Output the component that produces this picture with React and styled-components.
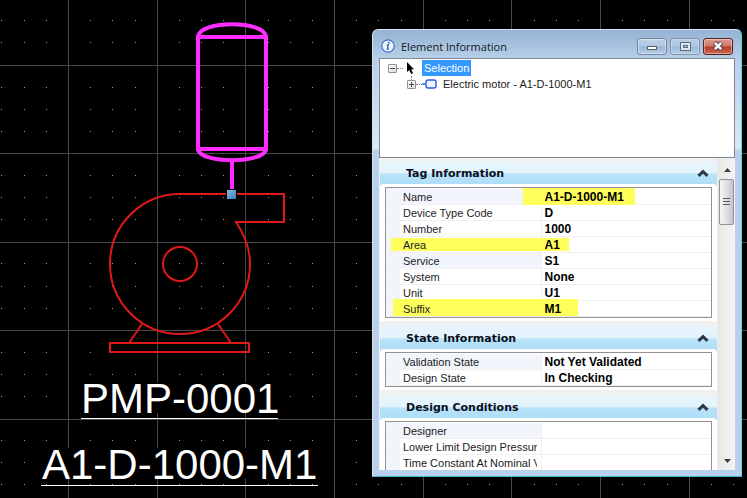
import { useState } from "react";
import styled, { createGlobalStyle } from "styled-components";

const GlobalStyle = createGlobalStyle`
  * {
    box-sizing: border-box;
  }
  body {
    margin: 0;
    background: #000000;
    font-family: "Liberation Sans", Arial, sans-serif;
    font-size: 11px;
    color: #1c1c1c;
  }
  button {
    padding: 0;
    font: inherit;
    color: inherit;
    cursor: pointer;
  }
`;

const Workspace = styled.main`
  position: relative;
  height: 100vh;
  min-height: 320px;
  overflow: hidden;
`;

const Drawing = styled.svg`
  display: block;
  width: 100%;
  height: 100%;
`;

const TagLabel = styled.text`
  font-family: "Liberation Sans", Arial, sans-serif;
  font-size: 42px;
  fill: #ffffff;
`;

const Dialog = styled.section`
  position: absolute;
  top: 29px;
  right: 5px;
  bottom: 21px;
  width: 370px;
  display: flex;
  flex-direction: column;
  padding: 0 6px 6px;
  border: 1px solid #45b5cf;
  border-top-color: #d5e5f4;
  border-left-color: #d3e2f2;
  border-right-color: #52d3ee;
  border-radius: 6px 6px 0 0;
  background: linear-gradient(
    #96b3d3,
    #b8d0e9 30px,
    #dbe7f5 118px,
    #b9d1ea 121px
  );
`;

const TitleBar = styled.header`
  flex: none;
  height: 28px;
  display: flex;
  align-items: center;
  gap: 5px;
  padding: 4px 2px 0;
`;

const Title = styled.h1`
  flex: 1;
  margin: 0;
  padding-left: 1px;
  font-family: "Open Sans", "Noto Sans", sans-serif;
  font-size: 11px;
  font-weight: 400;
  color: #101820;
`;

const WindowButtons = styled.div`
  display: flex;
  gap: 3px;
`;

const WindowButton = styled.button`
  width: 30px;
  height: 17px;
  display: flex;
  align-items: center;
  justify-content: center;
  border: 1px solid ${(props) => (props.$close ? "#5a1f1c" : "#6f87a4")};
  border-radius: 3px;
  box-shadow: inset 0 0 0 1px rgba(255, 255, 255, 0.4);
  background: ${(props) =>
    props.$close
      ? "linear-gradient(#dd9f94 0%, #cf7466 48%, #b73c27 52%, #cb6a52 100%)"
      : "linear-gradient(#bfd2e7 0%, #b0c7e0 48%, #9bb7d5 52%, #b5cbe3 100%)"};
  opacity: ${(props) => (props.$dim ? 0.75 : 1)};
`;

const TreePane = styled.ul`
  flex: none;
  height: 100px;
  margin: 0;
  padding: 1px 8px;
  border: 1px solid #828790;
  background: #ffffff;
  list-style: none;
`;

const TreeRow = styled.li`
  height: 16px;
  display: flex;
  align-items: center;
  padding-left: ${(props) => props.$depth * 19}px;
`;

const Expander = styled.button`
  position: relative;
  flex: none;
  width: 9px;
  height: 9px;
  border: 1px solid #919191;
  border-radius: 1px;
  background: linear-gradient(135deg, #ffffff, #dcdcdc);

  svg {
    display: block;
  }

  &::before {
    content: "";
    display: ${(props) => (props.$child ? "block" : "none")};
    position: absolute;
    left: 3px;
    bottom: 8px;
    height: 4px;
    border-left: 1px dotted #808080;
  }
`;

const Dots = styled.span`
  width: 6px;
  border-top: 1px dotted #808080;
`;

const TreeText = styled.span`
  height: 16px;
  margin-left: ${(props) => (props.$selected ? 5 : 3)}px;
  padding: 0 2px;
  line-height: 16px;
  color: ${(props) => (props.$selected ? "#ffffff" : "#1c1c1c")};
  background: ${(props) => (props.$selected ? "#3399ff" : "transparent")};
`;

const Body = styled.div`
  flex: 1;
  min-height: 0;
  display: flex;
  background: #f0f0f0;
`;

const Sections = styled.div`
  flex: 1;
  min-width: 0;
  overflow: hidden;
  padding: 3px 1px 0 1px;
`;

const Section = styled.section`
  margin-bottom: 5px;
  background: linear-gradient(#e4f5fd, #aedef8 23px);
`;

const SectionTitle = styled.h2`
  margin: 0;
  font-family: "DejaVu Sans", Verdana, sans-serif;
  font-size: 11px;
  font-weight: 700;
  color: #0a0f1c;
`;

const SectionToggle = styled.button`
  width: 100%;
  height: 23px;
  display: flex;
  align-items: center;
  justify-content: space-between;
  padding: 2px 8px 0 26px;
  border: none;
  background: linear-gradient(#e9f4fa 0%, #e2f4fd 52%, #b8e2f9 56%, #aedef8 100%);

  svg {
    transform: ${(props) => (props.$open ? "none" : "rotate(180deg)")};
  }
`;

const SectionBody = styled.div`
  padding: 3px 5px 3px;
  border-radius: 4px 4px 0 0;
  background: #ffffff;
`;

const PropertyBox = styled.div`
  padding-top: 1px;
  border: 1px solid #929292;
  background: linear-gradient(90deg, #f2f5fb 14px, #ffffff 14px);
`;

const PropertyTable = styled.table`
  width: 100%;
  table-layout: fixed;
  border-collapse: collapse;
`;

const PropertyRow = styled.tr`
  position: relative;
  height: 16px;
`;

const NameCell = styled.th`
  width: 155px;
  height: 16px;
  padding: 0 4px 0 17px;
  text-align: left;
  font-weight: 400;
  line-height: 15px;
  border-right: 1px solid #f0f0f0;
  background: ${(props) => (props.$shaded ? "#f2f5fb" : "transparent")};
  box-shadow: inset 0 -1px #f0f0f0;
`;

const ValueCell = styled.td`
  height: 16px;
  padding: 0 0 0 3px;
  font-size: 12px;
  font-weight: 700;
  line-height: 15px;
  color: #000000;
  box-shadow: inset 0 -1px #f0f0f0;
`;

// keeps the text above the marker stroke
const CellText = styled.span`
  position: relative;
  z-index: 1;
  display: block;
  overflow: hidden;
  white-space: nowrap;
`;

// yellow marker stroke laid over a property row
const Marker = styled.span`
  position: absolute;
  top: ${(props) => props.$mark.top}px;
  left: ${(props) => props.$mark.left}px;
  width: ${(props) => props.$mark.width}px;
  height: ${(props) => props.$mark.height}px;
  background: #ffff5c;
  pointer-events: none;
`;

const ScrollBar = styled.div`
  flex: none;
  width: 17px;
  display: flex;
  flex-direction: column;
  padding-top: 3px;
  border-left: 1px solid #e2e2e2;
  background: linear-gradient(90deg, #e9e9e9, #f3f3f3);
`;

const ScrollArrow = styled.button`
  height: 18px;
  display: flex;
  align-items: center;
  justify-content: center;
  border: none;
  background: transparent;
`;

const ScrollTrack = styled.div`
  flex: 1;
`;

const ScrollThumb = styled.button`
  width: 15px;
  height: 46px;
  display: flex;
  align-items: center;
  justify-content: center;
  border: 1px solid #929292;
  border-radius: 2px;
  background: linear-gradient(90deg, #f6f6f6, #e4e4e4 45%, #c4c4c8);
`;

const sections = [
  {
    title: "Tag Information",
    rows: [
      {
        name: "Name",
        value: "A1-D-1000-M1",
        shaded: true,
        mark: { top: -1, left: 137, width: 112, height: 17 },
      },
      { name: "Device Type Code", value: "D" },
      { name: "Number", value: "1000" },
      {
        name: "Area",
        value: "A1",
        mark: { top: 1, left: 5, width: 178, height: 13 },
      },
      { name: "Service", value: "S1", shaded: true },
      { name: "System", value: "None" },
      { name: "Unit", value: "U1" },
      {
        name: "Suffix",
        value: "M1",
        mark: { top: -2, left: 7, width: 185, height: 17 },
      },
    ],
  },
  {
    title: "State Information",
    rows: [
      { name: "Validation State", value: "Not Yet Validated", shaded: true },
      { name: "Design State", value: "In Checking" },
    ],
  },
  {
    title: "Design Conditions",
    rows: [
      { name: "Designer", value: "", shaded: true },
      { name: "Lower Limit Design Pressur", value: "" },
      { name: "Time Constant At Nominal V", value: "" },
    ],
  },
];

const GRID_X = 88.67;
const GRID_Y = 88.4;
const columns = Array.from({ length: 30 }, (_, i) => 68 + (i - 1) * GRID_X);
const rows = Array.from({ length: 18 }, (_, i) => 65 + (i - 1) * GRID_Y);
const minor = [1, 2, 3];

const dotX = columns.flatMap((x) => minor.map((n) => Math.round(x + (n * GRID_X) / 4)));
const dotY = rows.flatMap((y) => minor.map((n) => Math.floor(y + (n * GRID_Y) / 4)));

const dotsPath = dotX
  .flatMap((x) => dotY.map((y) => `M${x} ${y}h1v1h-1z`))
  .join("");

const Grid = () => (
  <g shapeRendering="crispEdges">
    {columns.map((x) => (
      <rect key={x} x={Math.round(x)} width="1" height="100%" fill="#484848" />
    ))}
    {rows.map((y) => (
      <rect key={y} y={Math.round(y)} width="100%" height="1" fill="#484848" />
    ))}
    <path d={dotsPath} fill="#949494" />
  </g>
);

const PlantDrawing = () => (
  <Drawing role="img" aria-label="Pump PMP-0001 with electric motor A1-D-1000-M1">
    <defs>
      <linearGradient id="grip" x1="0" y1="0" x2="1" y2="1">
        <stop offset="0" stopColor="#85bce3" />
        <stop offset="1" stopColor="#3b7fb5" />
      </linearGradient>
    </defs>
    <Grid />

    <g fill="none" stroke="#e01818" strokeWidth="2">
      <path d="M180 194H284V222H236C244 234 250 248 250 264A70 70 0 1 1 180 194" />
      <circle cx="180" cy="264" r="17" />
      <path d="M142 324L129 343M218 324L231 343" />
      <rect x="110" y="343" width="139" height="9" />
    </g>

    <g fill="none" stroke="#ff2cff" strokeWidth="4">
      <rect x="198" y="37" width="68" height="112" />
      <path d="M198 37C199 20 265 20 266 37M198 149C199 164 265 164 266 149" />
      <path d="M232 160V189" />
    </g>
    <rect x="226" y="189" width="11" height="11" fill="#000000" />
    <rect x="227" y="190" width="9" height="9" fill="url(#grip)" />

    <rect x="81" y="382" width="198" height="31" fill="#000000" />
    <TagLabel x="81" y="413">
      PMP-0001
    </TagLabel>
    <rect x="81" y="418" width="197" height="1" fill="#ffffff" />
    <rect x="41" y="448" width="278" height="31" fill="#000000" />
    <TagLabel x="42" y="479">
      A1-D-1000-M1
    </TagLabel>
    <rect x="41" y="485" width="277" height="1" fill="#ffffff" />
  </Drawing>
);

const InfoIcon = () => (
  <svg width="14" height="14" viewBox="0 0 14 14" aria-hidden="true">
    <circle cx="7" cy="7" r="6.2" fill="#eef5fd" stroke="#3a6fd0" strokeWidth="1.2" />
    <circle cx="7.9" cy="3.7" r="0.9" fill="#2456c4" />
    <path
      d="M5.8 6H7.3L6.4 10.2H7.9"
      fill="none"
      stroke="#2456c4"
      strokeWidth="1.3"
    />
  </svg>
);

const ExpanderIcon = ({ open }) => (
  <svg width="7" height="7" viewBox="0 0 7 7" aria-hidden="true">
    <path d={open ? "M1 3.5h5" : "M1 3.5h5M3.5 1v5"} stroke="#3d4a66" />
  </svg>
);

const PropertySection = ({ section }) => {
  const [open, setOpen] = useState(true);

  return (
    <Section>
      <SectionTitle>
        <SectionToggle $open={open} aria-expanded={open} onClick={() => setOpen(!open)}>
          {section.title}
          <svg width="12" height="9" viewBox="0 0 12 9" aria-hidden="true">
            <path
              d="M1.5 6.8L6 2.6L10.5 6.8"
              fill="none"
              stroke="#2c3a44"
              strokeWidth="3"
            />
          </svg>
        </SectionToggle>
      </SectionTitle>
      {open && (
        <SectionBody>
          <PropertyBox>
            <PropertyTable aria-label={section.title}>
              <tbody>
                {section.rows.map((row) => (
                  <PropertyRow key={row.name}>
                    <NameCell scope="row" $shaded={row.shaded}>
                      <CellText>{row.name}</CellText>
                    </NameCell>
                    <ValueCell>
                      <CellText>{row.value}</CellText>
                      {row.mark && <Marker $mark={row.mark} />}
                    </ValueCell>
                  </PropertyRow>
                ))}
              </tbody>
            </PropertyTable>
          </PropertyBox>
        </SectionBody>
      )}
    </Section>
  );
};

const ElementDialog = () => {
  const [treeOpen, setTreeOpen] = useState(true);

  return (
    <Dialog role="dialog" aria-labelledby="dialog-title">
      <TitleBar>
        <InfoIcon />
        <Title id="dialog-title">Element Information</Title>
        <WindowButtons>
          <WindowButton aria-label="Minimize">
            <svg width="12" height="11" viewBox="0 0 12 11">
              <rect x="1.5" y="5.5" width="9" height="3" fill="#fff" stroke="#535e6b" />
            </svg>
          </WindowButton>
          <WindowButton aria-label="Maximize" $dim>
            <svg width="11" height="9" viewBox="0 0 11 9">
              <rect x="0.5" y="0.5" width="10" height="8" fill="#eef3f8" stroke="#465260" />
              <rect x="3.5" y="3.5" width="4" height="2" fill="#a9c0da" stroke="#465260" />
            </svg>
          </WindowButton>
          <WindowButton aria-label="Close" $close>
            <svg width="12" height="10" viewBox="0 0 12 10">
              <path d="M2.5 1.5L9.5 8.5M9.5 1.5L2.5 8.5" stroke="#51434a" strokeWidth="4.4" />
              <path d="M2.8 1.8L9.2 8.2M9.2 1.8L2.8 8.2" stroke="#ffffff" strokeWidth="2.4" />
            </svg>
          </WindowButton>
        </WindowButtons>
      </TitleBar>

      <TreePane>
        <TreeRow $depth={0}>
          <Expander aria-label="Toggle selection" onClick={() => setTreeOpen(!treeOpen)}>
            <ExpanderIcon open={treeOpen} />
          </Expander>
          <Dots />
          <svg width="14" height="14" viewBox="0 0 14 14" aria-hidden="true">
            <path d="M4 1V11L6.3 9L8.2 13L10 12.2L8.2 8.2H11Z" fill="#000000" />
          </svg>
          <TreeText $selected>Selection</TreeText>
        </TreeRow>
        {treeOpen && (
          <TreeRow $depth={1}>
            <Expander aria-label="Toggle electric motor" $child>
              <ExpanderIcon open={false} />
            </Expander>
            <Dots />
            <svg width="16" height="10" viewBox="0 0 16 10" aria-hidden="true">
              <path d="M0 5H4" stroke="#2b62d9" strokeWidth="1.4" />
              <rect
                x="4"
                y="1"
                width="10"
                height="8"
                rx="2"
                fill="#eef3ff"
                stroke="#2b62d9"
                strokeWidth="1.4"
              />
            </svg>
            <TreeText>Electric motor - A1-D-1000-M1</TreeText>
          </TreeRow>
        )}
      </TreePane>

      <Body>
        <Sections>
          {sections.map((section) => (
            <PropertySection key={section.title} section={section} />
          ))}
        </Sections>
        <ScrollBar>
          <ScrollArrow aria-label="Scroll up">
            <svg width="7" height="4" viewBox="0 0 7 4">
              <path d="M0 4L3.5 0L7 4Z" fill="#3c3c3c" />
            </svg>
          </ScrollArrow>
          <ScrollTrack>
            <ScrollThumb aria-label="Scroll position">
              <svg width="7" height="8" viewBox="0 0 7 8">
                <path d="M0 0.5H7M0 3.5H7M0 6.5H7" stroke="#5a5a5a" />
              </svg>
            </ScrollThumb>
          </ScrollTrack>
          <ScrollArrow aria-label="Scroll down">
            <svg width="7" height="4" viewBox="0 0 7 4">
              <path d="M0 0H7L3.5 4Z" fill="#3c3c3c" />
            </svg>
          </ScrollArrow>
        </ScrollBar>
      </Body>
    </Dialog>
  );
};

const App = () => {
  return (
    <>
      <GlobalStyle />
      <Workspace>
        <PlantDrawing />
        <ElementDialog />
      </Workspace>
    </>
  );
};

export default App;
